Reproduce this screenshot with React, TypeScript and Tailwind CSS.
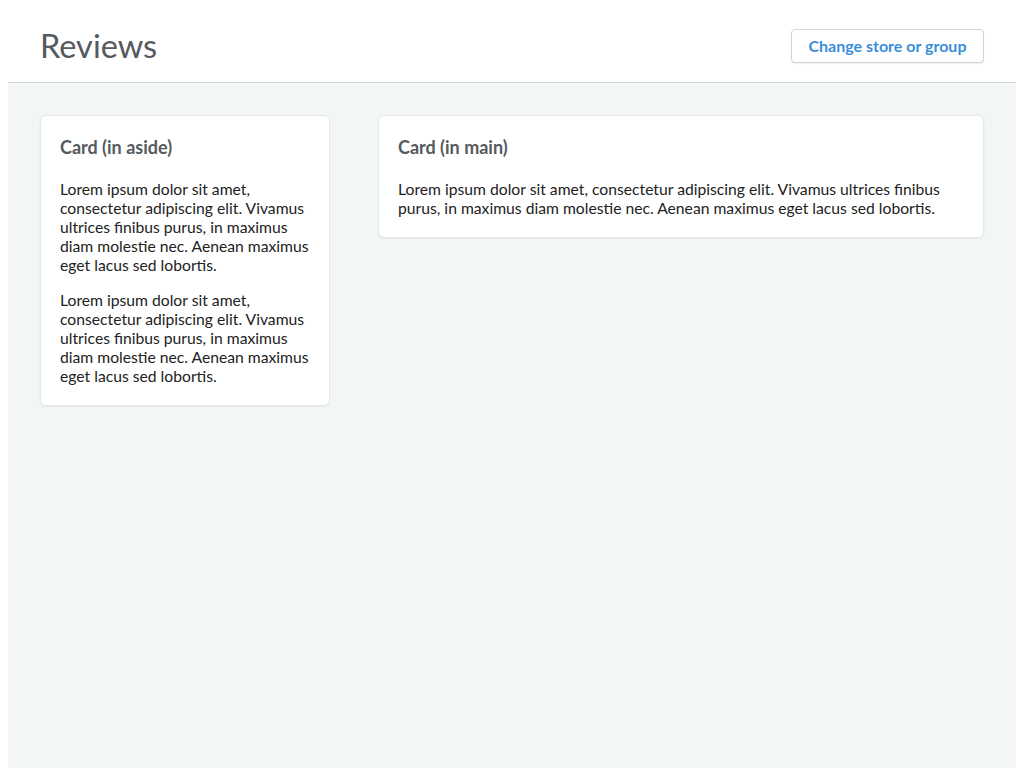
const lorem =
  'Lorem ipsum dolor sit amet, consectetur adipiscing elit. Vivamus ultrices finibus purus, in maximus diam molestie nec. Aenean maximus eget lacus sed lobortis.'

function Card({ title, paragraphs }: { title: string; paragraphs: string[] }) {
  return (
    <div className="bg-white rounded-md border border-[#e6e9eb] shadow-[0_1px_2px_rgba(0,0,0,0.07)] p-[19px]">
      <h2 className="text-[18px] leading-6 font-bold text-[#555a5e] mb-[21px]">{title}</h2>
      <div className="flex flex-col gap-4">
        {paragraphs.map((p, i) => (
          <p
            key={i}
            className="text-[15.7px] leading-[19px] text-[#222] [font-variant-ligatures:no-discretionary-ligatures]"
          >
            {p}
          </p>
        ))}
      </div>
    </div>
  )
}

export default function App() {
  return (
    <div
      className="min-h-screen bg-white px-2 flex flex-col"
      style={{ fontFamily: 'Lato, "Open Sans", sans-serif' }}
    >
      {/* Header */}
      <header className="h-[83px] pt-[10px] flex items-center justify-between px-8 border-b border-[#d3d8dc]">
        <h1 className="text-[32.5px] text-[#555a5e] font-normal leading-none">Reviews</h1>
        <button className="h-[34px] w-[193px] border border-[#cfd4d8] rounded bg-white text-[#3a8fd9] font-bold text-[16px] shadow-[0_1px_1px_rgba(0,0,0,0.06)]">
          Change store or group
        </button>
      </header>

      {/* Body */}
      <div className="flex-1 bg-[#f3f6f7] p-8 flex items-start gap-12">
        <aside className="w-[290px] shrink-0">
          <Card title="Card (in aside)" paragraphs={[lorem, lorem]} />
        </aside>
        <main className="flex-1">
          <Card title="Card (in main)" paragraphs={[lorem]} />
        </main>
      </div>
    </div>
  )
}
